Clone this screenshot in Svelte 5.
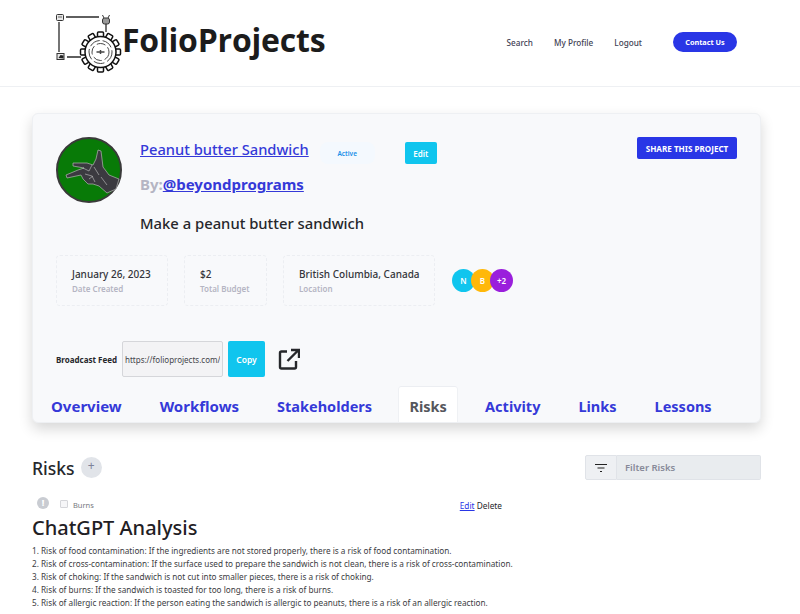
<script>
  const stats = [
    { value: 'January 26, 2023', label: 'Date Created', w: 'w1' },
    { value: '$2', label: 'Total Budget', w: 'w2' },
    { value: 'British Columbia, Canada', label: 'Location', w: 'w3' }
  ];
  const people = [
    { t: 'N', c: 'cyan' },
    { t: 'B', c: 'amber' },
    { t: '+2', c: 'purple' }
  ];
  const tabs = ['Overview', 'Workflows', 'Stakeholders', 'Risks', 'Activity', 'Links', 'Lessons'];
  const risks = [
    '1. Risk of food contamination: If the ingredients are not stored properly, there is a risk of food contamination.',
    '2. Risk of cross-contamination: If the surface used to prepare the sandwich is not clean, there is a risk of cross-contamination.',
    '3. Risk of choking: If the sandwich is not cut into smaller pieces, there is a risk of choking.',
    '4. Risk of burns: If the sandwich is toasted for too long, there is a risk of burns.',
    '5. Risk of allergic reaction: If the person eating the sandwich is allergic to peanuts, there is a risk of an allergic reaction.'
  ];
  const teeth = Array.from({ length: 12 }, (_, i) => i * 30);
</script>

<header class="top">
  <a class="logo" href="#home">
    <svg class="logo-mark" width="70" height="62" viewBox="0 0 70 62" fill="none">
      <path d="M4 10V40M11 5H44M51 12V20M12 45H26" stroke="#2b2b2b" stroke-width="1.300"/>
      <rect x="1.500" y="2.500" width="7" height="6" rx="1" fill="#e8e8e8" stroke="#333"/>
      <path d="M3 5h4" stroke="#666"/>
      <rect x="47.500" y="6" width="7" height="6" rx="2" fill="#999" stroke="#333"/>
      <path d="M49 6l-1.500-3M53 6l1.500-3" stroke="#333"/>
      <rect x="2" y="41.500" width="7" height="6" fill="#e8e8e8" stroke="#333"/>
      <path d="M3.500 46l2-3 3 .500v3z" fill="#222"/>
      <g transform="translate(45.500 40)" stroke="#111" fill="#fff" stroke-width="1.500">
        {#each teeth as a}
          <rect x="-3" y="-20" width="6" height="7" rx="1" transform="rotate({a})"/>
        {/each}
        <circle r="15.500"/>
        <circle r="11.500" stroke-width=".9" stroke-dasharray="11 3" stroke="#333"/>
        <circle r="8.500" stroke-width=".9" stroke-dasharray="9 3" stroke="#333"/>
        <path d="M-4 0h8M0-2v4" stroke-width="1.500" stroke="#444"/>
      </g>
    </svg>
    <span class="logo-text">FolioProjects</span>
  </a>
  <nav class="nav">
    <a href="#search">Search</a>
    <a href="#profile">My Profile</a>
    <a href="#logout">Logout</a>
    <a class="contact" href="#contact">Contact Us</a>
  </nav>
</header>

<main class="page">
  <section class="card">
    <div class="head">
      <svg class="avatar" width="66" height="66" viewBox="0 0 66 66">
        <circle cx="33" cy="33" r="32" fill="#087a07" stroke="#3a3a3a" stroke-width="2"/>
        <path d="M42 13l3 1 2 16 6 8 10 4-3 10-9 4-8-7-6-2-5 0-5-5-2-4-14 3-1-3 12-5 6-2-11-2 0-3 14 0 6 2 3-6z" fill="#3b3a40" stroke="#b5b5b5" stroke-width=".7"/>
        <path d="M27 31l6 3 3-6M29 37l7 2 3 6M33 42l4-3M45 40l6 8M38 30l5 8" fill="none" stroke="#c4c4c4" stroke-width=".6"/>
      </svg>
      <div class="info">
        <div class="title-row">
          <a class="title" href="#p">Peanut butter Sandwich</a>
          <span class="status">Active</span>
          <button class="edit">Edit</button>
        </div>
        <div class="by">By:<a href="#u">@beyondprograms</a></div>
        <p class="desc">Make a peanut butter sandwich</p>
      </div>
      <button class="share">SHARE THIS PROJECT</button>
    </div>

    <div class="stats">
      {#each stats as s}
        <div class="stat {s.w}">
          <div class="value">{s.value}</div>
          <div class="label">{s.label}</div>
        </div>
      {/each}
      <div class="people">
        {#each people as p}
          <span class="person {p.c}">{p.t}</span>
        {/each}
      </div>
    </div>

    <div class="feed">
      <span class="feed-label">Broadcast Feed</span>
      <input class="feed-input" value="https://folioprojects.com/" readonly />
      <button class="copy">Copy</button>
      <svg class="ext" width="22" height="22" viewBox="0 0 22 22" fill="none" stroke="#26272b" stroke-width="2.400">
        <path d="M9 3.500H3.500A1.500 1.500 0 0 0 2 5v14a1.500 1.500 0 0 0 1.500 1.500h13A1.500 1.500 0 0 0 18 19v-6"/>
        <path d="M9.500 13L20 2.500M13 2h8v8"/>
      </svg>
    </div>

    <div class="tabs">
      {#each tabs as t}
        <a href="#t" class="tab" class:active={t === 'Risks'}>{t}</a>
      {/each}
    </div>
  </section>

  <div class="risks-head">
    <div class="risks-title">
      <h2>Risks</h2>
      <button class="plus" aria-label="Add risk">+</button>
    </div>
    <div class="filter">
      <span class="filter-icon">
        <svg width="14" height="10" viewBox="0 0 14 10" stroke="#222" stroke-width="1.200"><path d="M1 1.500h12M3.500 5h7M6 8.500h2"/></svg>
      </span>
      <input class="filter-input" placeholder="Filter Risks" />
    </div>
  </div>

  <div class="risk-row">
    <span class="alert">!</span>
    <span class="check"></span>
    <span class="burns">Burns</span>
    <span class="actions"><a href="#e">Edit</a> Delete</span>
  </div>
  <h1 class="analysis">ChatGPT Analysis</h1>
  <div class="list">
    {#each risks as r}
      <div>{r}</div>
    {/each}
  </div>
</main>

<style>
  :global(body) {
    margin: 0;
    background: #fff;
    font-family: "Noto Sans", "Open Sans", sans-serif;
    color: #26272b;
    overflow: hidden;
  }
  a { color: inherit; }
  button { font-family: inherit; border: 0; cursor: pointer; }

  .top {
    height: 87px;
    box-sizing: border-box;
    border-bottom: 1px solid #eef0f3;
    display: flex;
    align-items: flex-start;
    justify-content: space-between;
    padding: 0 63px 0 55px;
  }
  .logo {
    display: flex;
    align-items: flex-start;
    text-decoration: none;
    padding-top: 12px;
  }
  .logo-mark { flex: none; }
  .logo-text {
    font-family: "Open Sans", sans-serif;
    font-size: 32px;
    font-weight: 700;
    line-height: 44px;
    color: #1c1c1c;
    margin: 6px 0 0 -3px;
    letter-spacing: -.2px;
  }
  .nav {
    display: flex;
    align-items: center;
    height: 20px;
    margin-top: 32px;
    font-size: 8.200px;
    color: #3f4254;
    font-weight: 500;
  }
  .nav a { text-decoration: none; margin-right: 21px; }
  .nav a.contact {
    margin: 0 0 0 10px;
    width: 64px;
    height: 20px;
    border-radius: 10px;
    background: #2936e6;
    color: #fff;
    font-size: 7.300px;
    font-weight: 700;
    display: flex;
    align-items: center;
    justify-content: center;
  }

  .page { padding: 26px 39px 0 32px; }
  .card {
    height: 310px;
    box-sizing: border-box;
    background: #f8f9fb;
    border-radius: 6px;
    border: 1px solid #eef0f3;
    box-shadow: 0 6px 14px rgba(0, 0, 0, .16);
    padding: 23px 23px 0;
    display: flex;
    flex-direction: column;
  }
  .head { display: flex; align-items: flex-start; height: 118px; }
  .avatar { flex: none; }
  .info { margin-left: 18px; flex: 1; }
  .title-row { display: flex; align-items: flex-start; height: 37px; }
  .title {
    font-size: 14.700px;
    line-height: 25px;
    color: #3539d8;
    font-weight: 500;
  }
  .status {
    margin: 5px 30px 0 11px;
    width: 55px;
    height: 22px;
    border-radius: 8px;
    background: #f4f9fe;
    color: #1a8fe8;
    font-size: 6.500px;
    font-weight: 600;
    display: flex;
    align-items: center;
    justify-content: center;
  }
  .edit {
    margin-top: 5px;
    width: 32px;
    height: 22px;
    border-radius: 2px;
    background: #10c5ee;
    color: #fff;
    font-size: 8px;
    font-weight: 600;
    padding: 0;
  }
  .by {
    font-size: 15px;
    font-weight: 700;
    line-height: 20px;
    color: #b5b5c3;
  }
  .by a { color: #3539d8; }
  .desc {
    margin: 18px 0 0;
    font-size: 14.800px;
    line-height: 22px;
    font-weight: 500;
    color: #26272b;
  }
  .share {
    width: 100px;
    height: 22px;
    background: #2936e6;
    color: #fff;
    border-radius: 2px;
    font-size: 8.100px;
    font-weight: 700;
    padding: 0;
  }

  .stats { display: flex; align-items: center; height: 51px; margin-top: 1px; }
  .stat {
    height: 51px;
    box-sizing: border-box;
    border: 1px dashed #eceef2;
    border-radius: 4px;
    padding: 11px 0 0 15px;
    margin-right: 16px;
  }
  .w1 { width: 112px; }
  .w2 { width: 83px; }
  .w3 { width: 152px; }
  .value { font-size: 10px; line-height: 15px; font-weight: 500; color: #33343a; }
  .label { font-size: 8px; line-height: 12px; font-weight: 600; color: #b5b5c3; margin-top: 1px; }
  .people { display: flex; margin-left: 1px; }
  .person {
    width: 23px;
    height: 23px;
    border-radius: 50%;
    color: #fff;
    font-size: 8px;
    font-weight: 600;
    display: flex;
    align-items: center;
    justify-content: center;
    margin-right: -4px;
  }
  .cyan { background: #10c5ee; }
  .amber { background: #ffb80a; }
  .purple { background: #9a1fdc; }

  .feed { display: flex; align-items: center; height: 36px; margin-top: 35px; }
  .feed-label { font-size: 8px; font-weight: 700; width: 66px; color: #26272b; }
  .feed-input {
    width: 101px;
    height: 36px;
    box-sizing: border-box;
    border: 1px solid #d5d6da;
    background: #f3f3f5;
    border-radius: 2px;
    padding: 0 2px;
    font: 8px "Noto Sans", sans-serif;
    color: #44454b;
    outline: none;
  }
  .copy {
    width: 37px;
    height: 36px;
    margin-left: 5px;
    background: #10c5ee;
    color: #fff;
    border-radius: 2px;
    font-size: 8.500px;
    font-weight: 600;
    padding: 0;
  }
  .ext { margin-left: 13px; }

  .tabs { display: flex; align-items: flex-end; height: 35px; margin-top: 10px; margin-left: -5px; }
  .tab {
    flex: none;
    font-size: 14.500px;
    font-weight: 700;
    color: #3539d8;
    text-decoration: none;
    line-height: 38px;
    height: 35px;
    margin-right: 38px;
  }
  .tab:nth-child(-n+2) { font-size: 15px; }
  .tab.active {
    background: #fff;
    color: #55565c;
    width: 58px;
    text-align: center;
    margin: 0 28px 0 -11px;
    border-radius: 2px 2px 0 0;
    font-size: 14.500px;
    box-shadow: 0 -1px 0 #eceef2, 1px 0 0 #eff1f4, -1px 0 0 #eff1f4;
  }

  .risks-head {
    display: flex;
    justify-content: space-between;
    align-items: flex-start;
    margin-top: 32px;
    height: 40px;
  }
  .risks-title { display: flex; align-items: center; height: 26px; }
  h2 { margin: 0; font-size: 17.500px; font-weight: 500; line-height: 26px; color: #26272b; }
  .plus {
    width: 21px;
    height: 21px;
    border-radius: 50%;
    background: #e1e4e9;
    color: #7e8299;
    font-size: 12px;
    line-height: 14px;
    padding: 0 0 4px;
    margin: -1px 0 0 6px;
  }
  .filter { display: flex; width: 176px; height: 25px; }
  .filter-icon {
    width: 32px;
    flex: none;
    background: #eef0f3;
    border: 1px solid #e0e3e8;
    border-radius: 2px 0 0 2px;
    box-sizing: border-box;
    display: flex;
    align-items: center;
    justify-content: center;
  }
  .filter-input {
    flex: 1;
    min-width: 0;
    box-sizing: border-box;
    background: #e9ecef;
    border: 1px solid #e0e3e8;
    border-left: 0;
    padding: 0 8px;
    font: 600 9.500px "Noto Sans", sans-serif;
    outline: none;
    border-radius: 0 2px 2px 0;
  }
  .filter-input::placeholder { color: #878a99; }

  .risk-row {
    display: flex;
    align-items: center;
    box-sizing: border-box;
    height: 14px;
    margin-top: 3px;
    padding-left: 5px;
    width: 470px;
    font-size: 8.300px;
  }
  .alert {
    width: 12px;
    height: 12px;
    border-radius: 50%;
    background: #c9ccd2;
    color: #fff;
    font-size: 9px;
    font-weight: 800;
    line-height: 12px;
    text-align: center;
    margin-top: -4px;
  }
  .check {
    width: 8px;
    height: 8px;
    box-sizing: border-box;
    border: 1px solid #d5d6da;
    background: #f6f6f8;
    margin-left: 11px;
    margin-top: -2px;
    border-radius: 1px;
  }
  .burns { margin-left: 5px; color: #77787e; font-size: 7.500px; }
  .actions { margin-left: auto; color: #26272b; }
  .actions a { color: #2936e6; }
  .analysis {
    margin: 1px 0 0;
    font-size: 20px;
    line-height: 30px;
    font-weight: 500;
    color: #1f2024;
  }
  .list { margin-top: 1px; font-size: 8.200px; line-height: 13px; color: #3b3c42; }
</style>
